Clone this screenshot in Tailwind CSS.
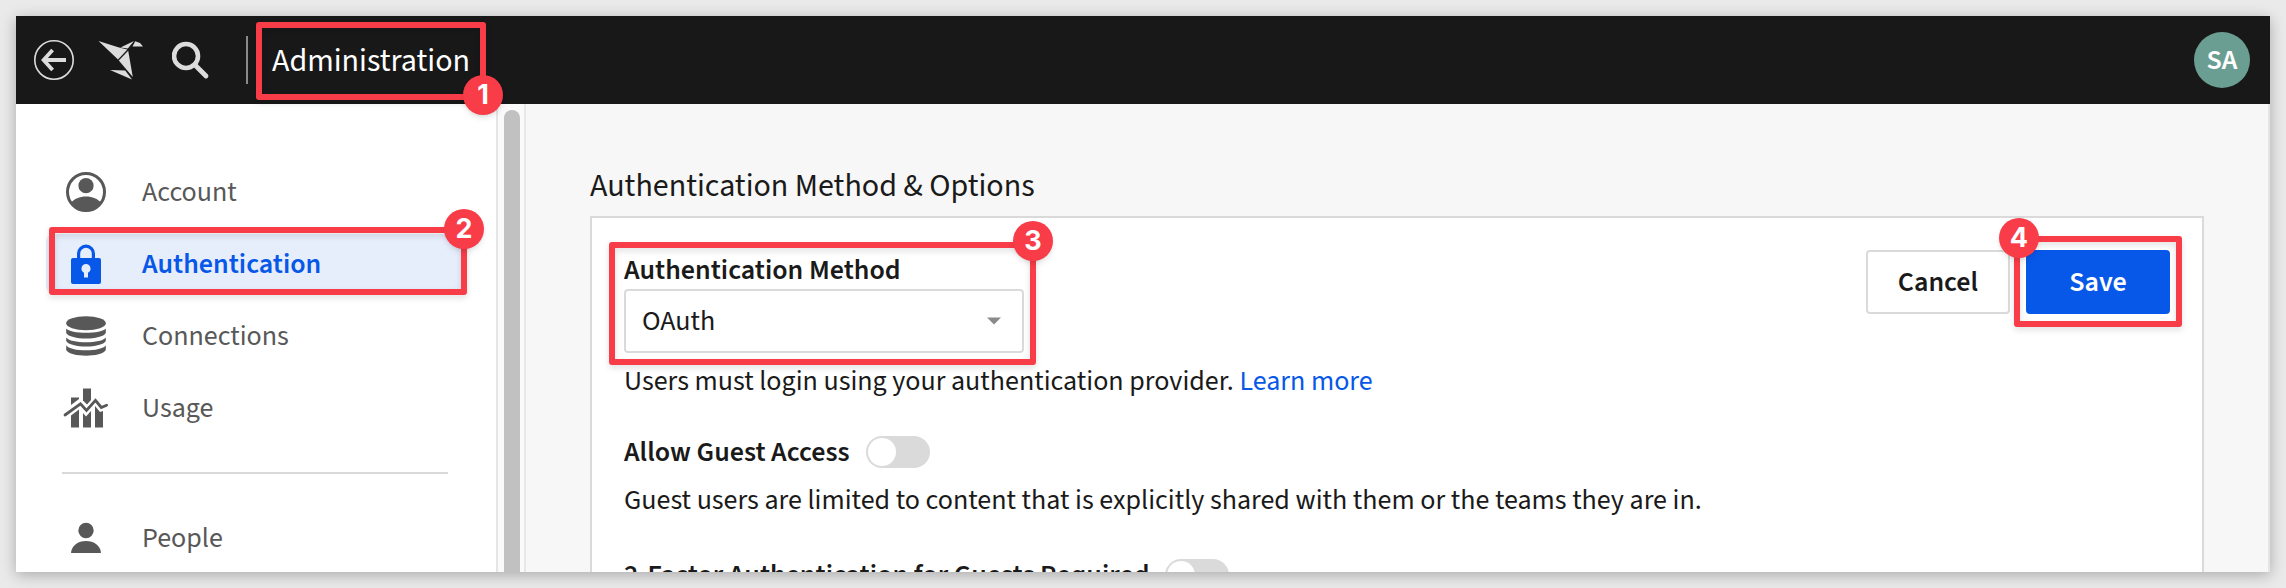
<!DOCTYPE html>
<html lang="en">
<head>
<meta charset="utf-8">
<title>Administration</title>
<script src="https://cdn.jsdelivr.net/npm/@tailwindcss/browser@4"></script>
</head>
<body class="relative h-[588px] w-[2286px] overflow-hidden bg-[#eaeaea] pt-4 pl-4 font-['Source_Sans_3','Noto_Sans_CJK_SC',sans-serif] text-[28px] leading-10 text-[#1a1a1a]">
<div class="flex h-[556px] w-[2254px] flex-col overflow-hidden bg-white shadow-[0_3px_14px_rgba(0,0,0,0.28)]">
  <header class="flex h-[88px] shrink-0 items-center bg-[#181818] pr-5 pl-[18px] text-white">
    <svg class="h-10 w-10" viewBox="0 0 40 40" fill="none" stroke="#dcdcdc"><circle cx="20" cy="20" r="19.2" stroke-width="1.6"/><path d="M32 20H10M18.6 10L9.6 20L18.6 30" stroke-width="3.8"/></svg>
    <svg class="ml-6 h-10 w-[46px]" viewBox="0 0 46 40" fill="#dcdcdc"><path d="M.5 1L21 7.6L29.4 9.4L20 19.4Z"/><path d="M22.5 7.4L36 1L29.8 8.6Z"/><path d="M37.2 1.2L42 3L45 6.6H34.5Z"/><path d="M30.2 10.8L34.8 37L20.8 20.4Z"/><path d="M12 30L27.2 30.6L34 39.5Z"/></svg>
    <svg class="ml-7 h-10 w-10" viewBox="0 0 40 40" fill="none" stroke="#dcdcdc"><circle cx="14" cy="16" r="12" stroke-width="4.6"/><path d="M23.5 25.5L34 36" stroke-width="4.8" stroke-linecap="round"/></svg>
    <div class="ml-[34px] h-12 w-0.5 bg-[#8a8a8a]"></div>
    <h1 class="ml-6 pt-0.5 text-[32px]">Administration</h1>
    <div class="ml-auto flex h-14 w-14 items-center justify-center rounded-full bg-[#6b9e93] font-semibold">SA</div>
  </header>
  <div class="flex min-h-0 flex-1">
    <nav class="flex w-[482px] shrink-0 flex-col border-r-2 border-[#e5e5e5] pt-[52px] pl-[30px] text-[#585858]">
      <a class="my-1.5 flex h-[60px] shrink-0 items-center gap-9 pl-5">
        <svg class="h-10 w-10" viewBox="0 0 40 40" fill="#585858"><circle cx="20" cy="20" r="18.5" fill="none" stroke="#585858" stroke-width="3"/><circle cx="20" cy="13.7" r="7.6"/><path d="M4.8 31C8.2 27 13.5 24.6 20 24.6S31.8 27 35.2 31C32 36.3 26.5 39.5 20 39.5S8 36.3 4.8 31Z"/></svg>
        <span>Account</span></a>
      <a class="my-1.5 flex h-[60px] w-[420px] shrink-0 items-center gap-9 rounded-lg bg-[#e6edfb] pl-5 font-semibold text-[#0758e8]">
        <svg class="h-10 w-10" viewBox="0 0 40 40"><path d="M12.600 15V9.500a7.400 7.400 0 0 1 14.800 0V15" fill="none" stroke="#0758e8" stroke-width="3.200"/><rect x="5" y="14" width="30" height="26" rx="2" fill="#0758e8"/><path d="M20 20a4.600 4.600 0 0 0-2 8.700V33.500h4V28.700A4.600 4.600 0 0 0 20 20Z" fill="#e6edfb"/></svg>
        <span>Authentication</span></a>
      <a class="my-1.5 flex h-[60px] shrink-0 items-center gap-9 pl-5">
        <svg class="h-10 w-10" viewBox="0 0 40 40" fill="#585858"><ellipse cx="20" cy="7.200" rx="19.800" ry="7"/><path d="M.2 12.500C4 18.200 36 18.200 39.800 12.500V17C36 24.300 4 24.300 .2 17Z"/><path d="M.2 21.500C4 27.800 36 27.800 39.800 21.500V25C36 32.300 4 32.300 .2 25Z"/><path d="M.2 29.200C4 36 36 36 39.800 29.200V34C36 41.600 4 41.600 .2 34Z"/></svg>
        <span>Connections</span></a>
      <a class="my-1.5 flex h-[60px] shrink-0 items-center gap-9 pl-[17px]">
        <svg class="mr-[-3px] h-10 w-[46px]" viewBox="0 0 46 40" fill="#585858"><path d="M8 9.500H16V11L8 17Z"/><path d="M20 .500H28V12L24 16.500L20 12.500Z"/><path d="M8 27.500L16 21.500V39.500H8Z"/><path d="M20 25L23 28.500L28 23V39.500H20Z"/><path d="M32 18L37 24L40 23V39.500H32Z"/><path d="M2 27L17.500 15.800L23.500 22.500L32.500 12.300L38.300 19.500L43.600 17.300" fill="none" stroke="#585858" stroke-width="2.800" stroke-linecap="round"/></svg>
        <span>Usage</span></a>
      <hr class="mt-7 ml-4 w-[386px] shrink-0 border-t-2 border-[#d9d9d9]">
      <a class="mt-[34px] flex h-[60px] shrink-0 items-center gap-9 pl-5">
        <svg class="h-10 w-10" viewBox="0 0 40 40" fill="#585858"><circle cx="20" cy="12.500" r="7.700"/><path d="M5 35C5.500 27.500 12 23 20 23S34.500 27.500 35 35Z"/></svg>
        <span>People</span></a>
    </nav>
    <div class="flex w-7 shrink-0 border-r-2 border-[#e8e8e8] bg-[#fafafa] pt-1.5 pl-1.5"><div class="w-4 rounded-t-full bg-[#c1c1c1]"></div></div>
    <main class="flex min-w-0 flex-1 flex-col border-r-2 border-[#e5e5e5] bg-[#f7f7f7] pt-[62px] pr-16 pl-16">
      <h2 class="h-[50px] shrink-0 text-[32px]">Authentication Method &amp; Options</h2>
      <section class="flex h-[500px] shrink-0 justify-between border-2 border-[#dadada] bg-white pr-8 pl-8">
        <div>
          <h3 class="mt-[32px] font-semibold">Authentication Method</h3>
          <div class="mt-[-1px] flex h-16 w-[400px] items-center justify-between rounded border-2 border-[#dadada] pr-[21px] pl-4"><span>OAuth</span><svg class="h-2 w-[14px]" viewBox="0 0 14 8"><path d="M0 .500H14L7 7.500Z" fill="#8a8a8a"/></svg></div>
          <p class="mt-2">Users must login using your authentication provider. <a class="text-[#0758e8]">Learn more</a></p>
          <div class="mt-[31px] flex items-center"><h3 class="font-semibold">Allow Guest Access</h3><div class="ml-4 flex h-8 w-16 items-center rounded-full bg-[#dadada] pl-0.5"><div class="h-7 w-7 rounded-full bg-white"></div></div></div>
          <p class="mt-2">Guest users are limited to content that is explicitly shared with them or the teams they are in.</p>
          <div class="mt-[35px] flex items-center"><h3 class="font-semibold">2-Factor Authentication for Guests Required</h3><div class="ml-4 flex h-8 w-16 items-center rounded-full bg-[#dadada] pl-0.5"><div class="h-7 w-7 rounded-full bg-white"></div></div></div>
        </div>
        <div class="mt-8 flex gap-4 font-semibold">
          <button class="h-16 w-36 rounded border-2 border-[#dadada] bg-white">Cancel</button>
          <button class="h-16 w-36 rounded bg-[#0758e8] text-white">Save</button>
        </div>
      </section>
    </main>
  </div>
</div>
<!-- Numbered step callouts over the page -->
<div class="absolute inset-0 font-['Inter',sans-serif] text-[27px] leading-[39px] font-bold text-white">
  <div class="absolute top-[22px] left-[256px] h-[78px] w-[230px] rounded-[3px] border-6 border-[#f83c48] drop-shadow-md"></div>
  <div class="absolute top-[75px] left-[463px] h-10 w-10 rounded-full bg-[#f83c48] text-center shadow-md">1</div>
  <div class="absolute top-[227px] left-[49px] h-[68px] w-[418px] rounded-[3px] border-6 border-[#f83c48] drop-shadow-md"></div>
  <div class="absolute top-[209px] left-[444px] h-10 w-10 rounded-full bg-[#f83c48] text-center shadow-md">2</div>
  <div class="absolute top-[242px] left-[609px] h-[123px] w-[427px] rounded-[3px] border-6 border-[#f83c48] drop-shadow-md"></div>
  <div class="absolute top-[221px] left-[1013px] h-10 w-10 rounded-full bg-[#f83c48] text-center shadow-md">3</div>
  <div class="absolute top-[236px] left-[2014px] h-[91px] w-[168px] rounded-[3px] border-6 border-[#f83c48] drop-shadow-md"></div>
  <div class="absolute top-[218px] left-[1999px] h-10 w-10 rounded-full bg-[#f83c48] text-center shadow-md">4</div>
</div>
</body>
</html>
